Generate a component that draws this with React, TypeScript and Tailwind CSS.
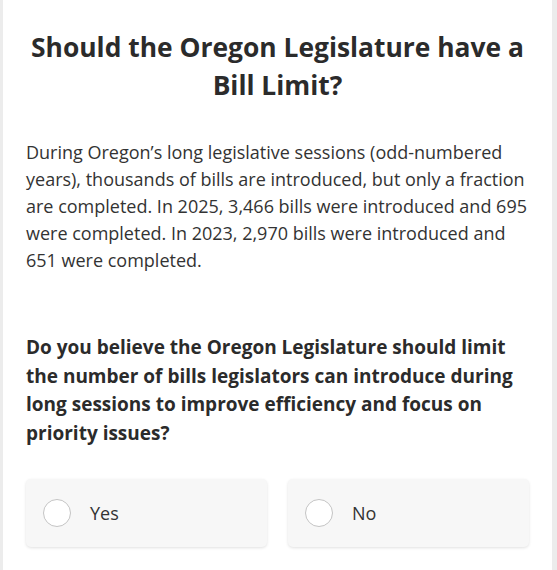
export default function App() {
  const options = ["Yes", "No"];

  return (
    <div className="min-h-[570px] bg-[#ececec] px-[3px] pr-[5px] font-['Open_Sans',sans-serif]">
      <div className="min-h-[570px] bg-white px-[23px] pt-[28px]">
        <h1 className="text-center text-[26.4px] font-bold leading-[38px] text-[#2b2b2b]">
          Should the Oregon Legislature have a Bill Limit?
        </h1>

        <p className="mt-[35px] text-[18px] leading-[27px] text-[#333333]">
          During Oregon’s long legislative sessions (odd-numbered years), thousands of bills
          are introduced, but only a fraction are completed. In 2025, 3,466 bills were
          introduced and 695 were completed. In 2023, 2,970 bills were introduced and 651
          were completed.
        </p>

        <h2 className="mt-[59px] text-[19px] font-bold leading-[28.5px] text-[#2b2b2b]">
          Do you believe the Oregon Legislature should limit the number of bills legislators
          can introduce during long sessions to improve efficiency and focus on priority
          issues?
        </h2>

        <div className="mt-[32px] grid grid-cols-2 gap-[21px]">
          {options.map((label) => (
            <label
              key={label}
              className="flex h-[68px] cursor-pointer items-center gap-[19px] rounded-[5px] bg-[#f7f7f7] pl-[17px] shadow-[0_1px_3px_rgba(0,0,0,0.12)]"
            >
              <span className="h-[28px] w-[28px] rounded-full border border-[#c4c4c4] bg-white" />
              <span className="text-[18px] text-[#333333]">{label}</span>
            </label>
          ))}
        </div>
      </div>
    </div>
  );
}
